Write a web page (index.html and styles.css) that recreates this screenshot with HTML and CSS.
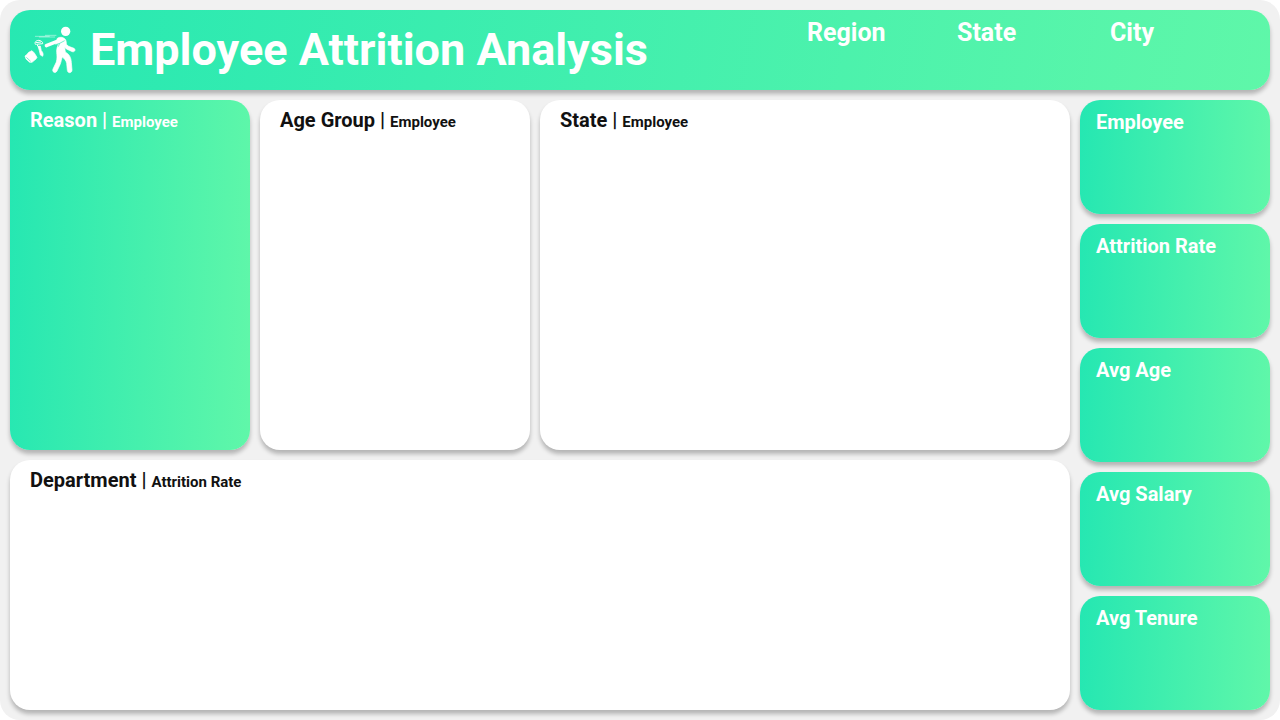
FILE: index.html
```html
<!DOCTYPE html>
<html lang="en">
<head>
<meta charset="utf-8">
<meta name="viewport" content="width=device-width, initial-scale=1">
<title>Employee Attrition Analysis</title>
<link rel="stylesheet" href="styles.css">
</head>
<body>
<div class="dashboard">
  <header class="card card-accent header">
    <svg class="logo" viewBox="0 0 180 180" aria-hidden="true">
      <circle cx="137" cy="34" r="14"/>
      <path class="motion" d="M46 49H88M76 46H108M58 51H104"/>
      <path class="arm" d="M79 77L117 62"/>
      <path class="shape" d="M112 55C119 50 129 51 135 57C139 61 139 68 139 73L146 79L162 85C168 89 164 97 157 95L139 87L134 82L136 96C148 103 153 112 154 127L156 150C156 160 143 161 142 151L140 130C138 121 133 116 127 111C124 118 124 125 120 134L111 153C106 162 95 156 99 147L109 126C112 115 111 107 110 97C109 87 113 77 116 71L107 73Z"/>
      <path class="seam" d="M107 74L119 70L134 62M119 70L115 80"/>
      <path class="strap" d="M46 73C42 65 50 61 57 61C64 62 69 67 68 71L50 73L58 84M48 68L62 66"/>
      <path class="shape" d="M54 79L61 78L64 92C69 96 71 104 68 109L61 105L58 92Z"/>
      <path class="shape" d="M15 108L20 104L26 97L36 92L43 99L51 112L48 117L36 127L29 127L18 117Z"/>
      <path class="seam" d="M19 112L32 124"/>
    </svg>
    <h1 class="title">Employee Attrition Analysis</h1>
    <div class="filters">
      <span>Region</span>
      <span>State</span>
      <span>City</span>
    </div>
  </header>

  <main class="charts">
    <section class="card card-accent panel">
      <h2 class="heading">Reason | <small>Employee</small></h2>
    </section>
    <section class="card panel">
      <h2 class="heading">Age Group | <small>Employee</small></h2>
    </section>
    <section class="card panel">
      <h2 class="heading">State | <small>Employee</small></h2>
    </section>
    <section class="card panel panel-wide">
      <h2 class="heading">Department | <small>Attrition Rate</small></h2>
    </section>
  </main>

  <aside class="metrics">
    <section class="card card-accent metric"><h2 class="heading">Employee</h2></section>
    <section class="card card-accent metric"><h2 class="heading">Attrition Rate</h2></section>
    <section class="card card-accent metric"><h2 class="heading">Avg Age</h2></section>
    <section class="card card-accent metric"><h2 class="heading">Avg Salary</h2></section>
    <section class="card card-accent metric"><h2 class="heading">Avg Tenure</h2></section>
  </aside>
</div>
</body>
</html>
```

FILE: styles.css
```css
* {
  box-sizing: border-box;
}

body {
  margin: 0;
  background: #fff;
  color: #111;
  font-family: Roboto, "Liberation Sans", sans-serif;
}

.dashboard {
  display: grid;
  grid-template-columns: 1fr 190px;
  grid-template-rows: auto 1fr;
  gap: 10px;
  min-height: 100vh;
  padding: 10px;
  border-radius: 20px;
  background: #f1f1f1;
}

.card {
  border-radius: 20px;
  background: #fff;
  box-shadow: 0 4px 4px rgba(0, 0, 0, 0.25);
}

.card-accent {
  background: linear-gradient(92deg, #25e7b2, #60f7a9);
  color: #fff;
}

.header {
  grid-column: 1 / -1;
  display: flex;
  align-items: center;
  gap: 10px;
  padding: 10px;
  background: linear-gradient(100deg, #27e8b2, #5ff7a9);
}

.logo {
  width: 60px;
  height: 60px;
  flex: none;
  fill: #fff;
}

.logo .motion,
.logo .arm,
.logo .strap {
  fill: none;
  stroke: #fff;
  stroke-linecap: round;
  stroke-linejoin: round;
}

.logo .motion {
  stroke-width: 2;
  opacity: 0.7;
}

.logo .arm {
  stroke-width: 10;
}

.logo .strap {
  stroke-width: 3;
}

.logo .shape {
  stroke: #fff;
  stroke-width: 2;
  stroke-linejoin: round;
}

.logo .seam {
  fill: none;
  stroke: #2ce9b1;
  stroke-width: 2;
}

.title {
  margin: 0;
  font-size: 45px;
  line-height: 60px;
  font-weight: 700;
  white-space: nowrap;
}

.filters {
  display: grid;
  grid-template-columns: 150px 153px 150px;
  align-self: flex-start;
  margin-left: auto;
  font-size: 25px;
  line-height: 25px;
  font-weight: 700;
}

.charts {
  display: grid;
  grid-template-columns: 24fr 27fr 53fr;
  grid-template-rows: 7fr 5fr;
  gap: 10px;
}

.panel {
  padding: 8px 20px;
}

.panel-wide {
  grid-column: 1 / -1;
}

.heading {
  margin: 0;
  font-size: 20px;
  line-height: 24px;
  font-weight: 700;
}

.heading small {
  font-size: 15px;
}

.metrics {
  display: grid;
  grid-auto-rows: 1fr;
  gap: 10px;
}

.metric {
  padding: 10px 16px;
}
```
